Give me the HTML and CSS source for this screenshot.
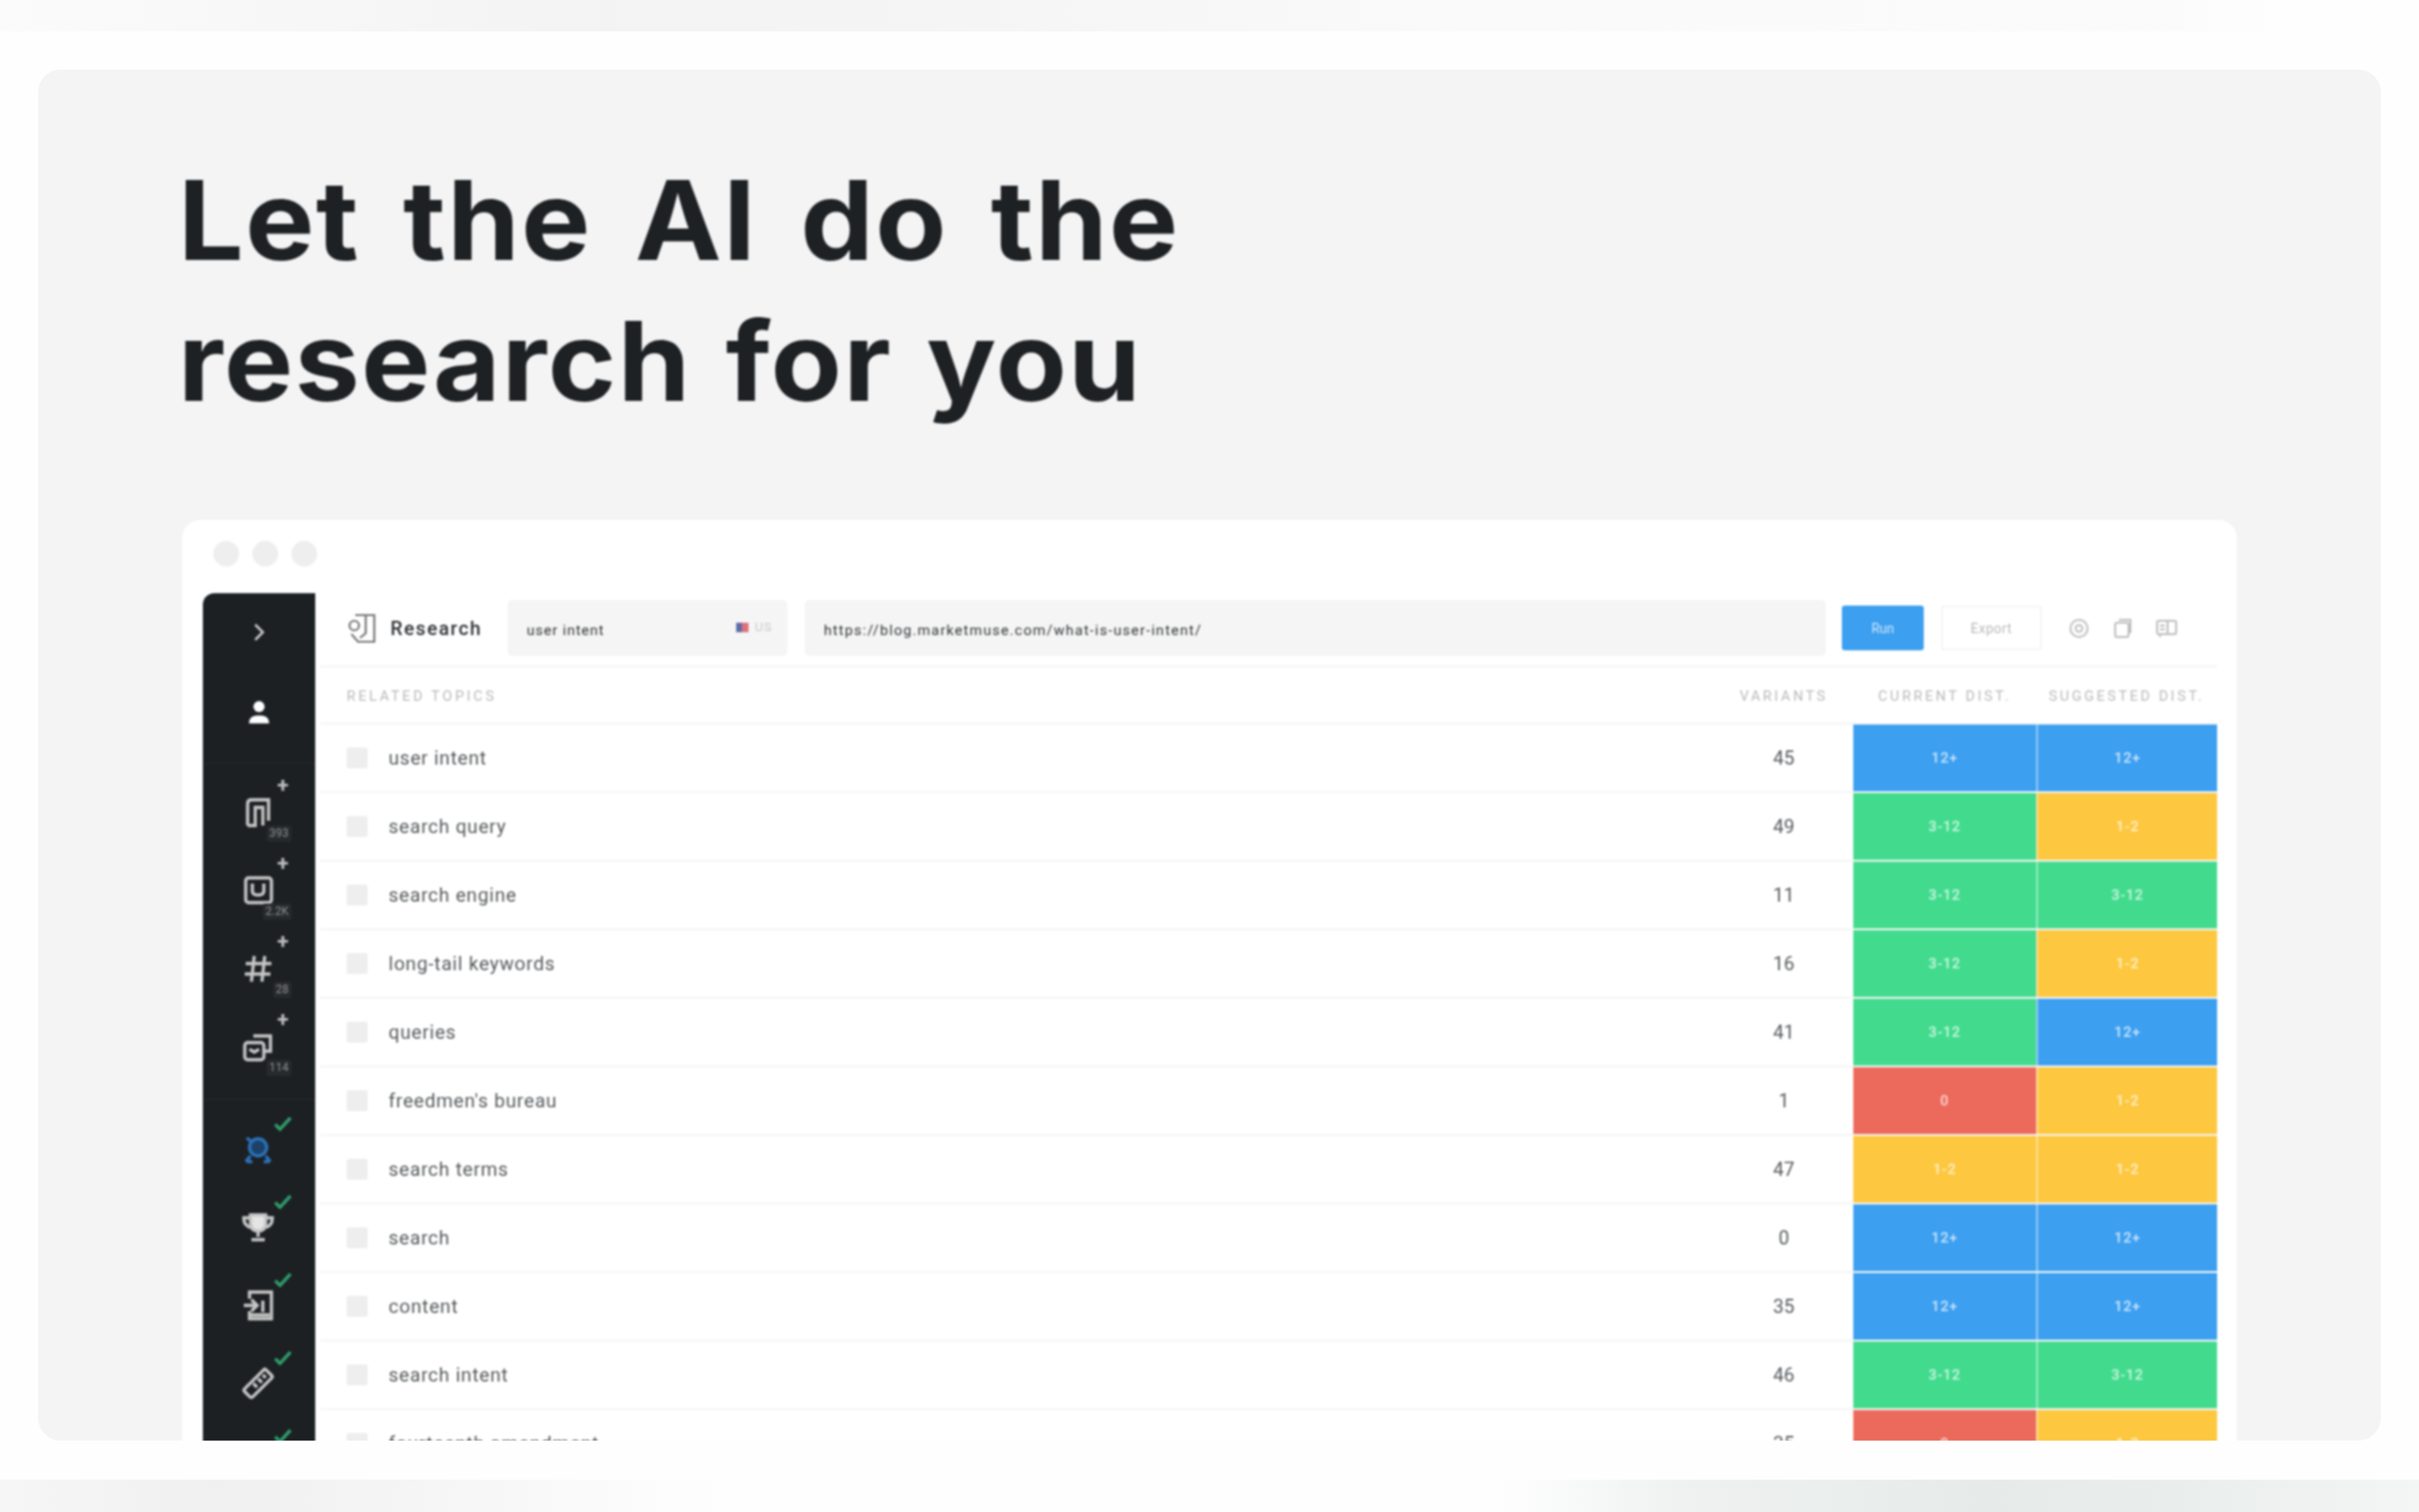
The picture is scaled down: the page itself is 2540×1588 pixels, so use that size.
FILE: index.html
```html
<!DOCTYPE html>
<html lang="en">
<head>
  <meta charset="UTF-8" />
  <title>Let the AI do the research for you</title>
  <link rel="stylesheet" href="styles.css">
</head>
<body>
  <div class="strip strip-top"></div>

  <section class="card">
    <h1><span class="line-one">Let the AI do the</span><span class="line-two">research for you</span></h1>

    <div class="window">
      <div class="dots"><span></span><span></span><span></span></div>

      <div class="app">
        <aside class="sidebar">
          <div class="side-top">
            <svg class="chevron" viewBox="0 0 24 24"><path d="M8 4l8 8-8 8"/></svg>
            <svg class="user" viewBox="0 0 24 24"><circle cx="12" cy="7" r="5"/><path d="M3 22c0-6 4-7 9-7s9 1 9 7z"/></svg>
          </div>

          <div class="side-group">
            <div class="tool">
              <svg class="glyph" viewBox="0 0 34 34"><path d="M6 31V8q0-4 4-4h18v22"/><path d="M6 31h8V12h8v19"/></svg>
              <span class="plus">+</span><span class="badge">393</span>
            </div>
            <div class="tool">
              <svg class="glyph" viewBox="0 0 34 34"><rect x="4" y="4" width="27" height="26" rx="3"/><path d="M11 10v8q0 4 6 4t6-4v-8"/></svg>
              <span class="plus">+</span><span class="badge">2.2K</span>
            </div>
            <div class="tool">
              <svg class="glyph" viewBox="0 0 34 34"><path d="M13 4l-3 27M24 4l-3 27M4 12h27M3 23h27"/></svg>
              <span class="plus">+</span><span class="badge">28</span>
            </div>
            <div class="tool">
              <svg class="glyph" viewBox="0 0 34 34"><path d="M12 6h18v16h-7"/><rect x="3" y="13" width="20" height="18" rx="3"/><path d="M8 20l5 3 5-3"/></svg>
              <span class="plus">+</span><span class="badge">114</span>
            </div>
          </div>

          <div class="side-group checked">
            <div class="tool tool-active">
              <svg class="glyph" viewBox="0 0 34 34"><circle cx="17" cy="15" r="9"/><path d="M5 5l5 4M9 24l-5 6M25 24l5 6M5 30h6M23 30h6"/></svg>
              <svg class="tick" viewBox="0 0 20 16"><path d="M2 9l5 5L18 2"/></svg>
            </div>
            <div class="tool">
              <svg class="glyph" viewBox="0 0 34 34"><path d="M9 4h16v8q0 9-8 9t-8-9z" class="solid"/><path d="M9 7H2q0 9 8 10M25 7h7q0 9-8 10M17 21v6M10 30h14"/></svg>
              <svg class="tick" viewBox="0 0 20 16"><path d="M2 9l5 5L18 2"/></svg>
            </div>
            <div class="tool">
              <svg class="glyph" viewBox="0 0 34 34"><path d="M8 10V3h23v28H8v-8"/><path d="M2 17h14M10 11l6 6-6 6M22 12v12M9 27h20"/></svg>
              <svg class="tick" viewBox="0 0 20 16"><path d="M2 9l5 5L18 2"/></svg>
            </div>
            <div class="tool">
              <svg class="glyph" viewBox="0 0 34 34"><rect x="1" y="11" width="32" height="12" rx="2" transform="rotate(-45 17 17)"/><path d="M12 17l4 4M17 12l4 4M22 8l3 3" /></svg>
              <svg class="tick" viewBox="0 0 20 16"><path d="M2 9l5 5L18 2"/></svg>
            </div>
            <div class="tool">
              <svg class="tick" viewBox="0 0 20 16"><path d="M2 9l5 5L18 2"/></svg>
            </div>
          </div>
        </aside>

        <div class="main">
          <div class="toolbar">
            <div class="title">
              <svg viewBox="0 0 30 32"><path d="M8 2h20v28H11L4 22"/><path d="M19 2v19l-6 5"/><circle cx="7" cy="13" r="5"/></svg>
              <span>Research</span>
            </div>
            <div class="field field-query">
              <span>user intent</span>
              <span class="locale"><i class="flag"></i>US</span>
            </div>
            <div class="field field-url">https://blog.marketmuse.com/what-is-user-intent/</div>
            <button class="btn btn-run">Run</button>
            <button class="btn btn-export">Export</button>
            <div class="actions">
              <svg viewBox="0 0 24 24"><circle cx="12" cy="12" r="9"/><circle cx="12" cy="12" r="3.5"/></svg>
              <svg viewBox="0 0 24 24"><rect x="4" y="6" width="14" height="15" rx="2"/><path d="M8 3h12v14"/></svg>
              <svg viewBox="0 0 24 24"><rect x="2" y="4" width="20" height="14" rx="2"/><path d="M13 4v14M5 18v3M5 9h5M5 13h5"/></svg>
            </div>
          </div>

          <div class="row head">
            <span class="name">Related topics</span>
            <span class="num">Variants</span>
            <span class="dist">Current dist.</span>
            <span class="dist">Suggested dist.</span>
          </div>

          <div class="row"><span class="name"><i></i>user intent</span><span class="num">45</span><span class="cell blue">12+</span><span class="cell blue">12+</span></div>
          <div class="row"><span class="name"><i></i>search query</span><span class="num">49</span><span class="cell green">3-12</span><span class="cell yellow">1-2</span></div>
          <div class="row"><span class="name"><i></i>search engine</span><span class="num">11</span><span class="cell green">3-12</span><span class="cell green">3-12</span></div>
          <div class="row"><span class="name"><i></i>long-tail keywords</span><span class="num">16</span><span class="cell green">3-12</span><span class="cell yellow">1-2</span></div>
          <div class="row"><span class="name"><i></i>queries</span><span class="num">41</span><span class="cell green">3-12</span><span class="cell blue">12+</span></div>
          <div class="row"><span class="name"><i></i>freedmen's bureau</span><span class="num">1</span><span class="cell red">0</span><span class="cell yellow">1-2</span></div>
          <div class="row"><span class="name"><i></i>search terms</span><span class="num">47</span><span class="cell yellow">1-2</span><span class="cell yellow">1-2</span></div>
          <div class="row"><span class="name"><i></i>search</span><span class="num">0</span><span class="cell blue">12+</span><span class="cell blue">12+</span></div>
          <div class="row"><span class="name"><i></i>content</span><span class="num">35</span><span class="cell blue">12+</span><span class="cell blue">12+</span></div>
          <div class="row"><span class="name"><i></i>search intent</span><span class="num">46</span><span class="cell green">3-12</span><span class="cell green">3-12</span></div>
          <div class="row"><span class="name"><i></i>fourteenth amendment</span><span class="num">35</span><span class="cell red">0</span><span class="cell yellow">1-2</span></div>
        </div>
      </div>
    </div>
  </section>

  <div class="strip strip-bottom"></div>
</body>
</html>
```

FILE: styles.css
```css
body {
  margin: 0;
  height: 1588px;
  overflow: hidden;
  background: #fefefe;
  font-family: Roboto, sans-serif;
  display: flex;
  flex-direction: column;
}

.strip {
  height: 33px;
  flex: none;
}

.strip-top {
  background: linear-gradient(90deg, #fbfbfb 0%, #f3f3f3 25%, #f5f5f5 40%, #fafafa 60%, #fbfbfb 90%, #fefefe 94%);
}

.strip-bottom {
  height: 34px;
  background: linear-gradient(90deg, #f6f6f6 0%, #f0f0f0 9%, #f5f5f5 17%, #fefefe 30%, #fefefe 62%, #eef1f0 70%, #e6ebe9 82%, #e9eeec 90%, #f4f5f5 100%);
}

.card {
  flex: none;
  height: 1440px;
  margin: 40px 40px 41px;
  padding: 0 151px;
  background: #f4f4f4;
  border-radius: 24px;
  overflow: hidden;
}

/* wider than Inter on its own, the original face is a geometric one */
h1 {
  margin: 85px 0 0 -4px;
  font-family: Inter, sans-serif;
  font-size: 115px;
  line-height: 148px;
  font-weight: 700;
  letter-spacing: 1.5px;
  color: #1e2124;
  transform: scaleX(1.06);
  transform-origin: left center;
  filter: blur(1px);
}

.line-one,
.line-two {
  display: block;
  white-space: nowrap;
}

.line-one {
  word-spacing: 14px;
}

.line-two {
  word-spacing: 5px;
}

.window {
  margin-top: 92px;
  padding: 0 21px 0 22px;
  background: #fff;
  border-radius: 20px 20px 0 0;
  filter: blur(1.1px);
}

.dots {
  height: 77px;
  display: flex;
  align-items: center;
  gap: 14px;
  padding: 0 0 7px 11px;
  box-sizing: border-box;
}

.dots span {
  width: 27px;
  height: 27px;
  border-radius: 50%;
  background: #eeeeee;
}

.app {
  display: flex;
  align-items: flex-start;
}

/* left rail */
.sidebar {
  width: 118px;
  height: 960px;
  flex: none;
  background: #1c2023;
  border-radius: 12px 0 0 0;
  color: #ccc;
}

.side-top {
  display: flex;
  flex-direction: column;
  align-items: center;
  height: 179px;
  padding-top: 29px;
  box-sizing: border-box;
  border-bottom: 1px solid #24282b;
}

.chevron {
  width: 24px;
  height: 24px;
  fill: none;
  stroke: #c9c9c9;
  stroke-width: 2.5;
}

.user {
  width: 28px;
  height: 28px;
  margin-top: 58px;
  fill: #fff;
}

.side-group {
  padding: 10px 0 14px;
  border-bottom: 1px solid #24282b;
}

.side-group.checked {
  padding-top: 11px;
  border: 0;
}

.tool {
  position: relative;
  height: 82px;
  display: flex;
  align-items: center;
  justify-content: center;
}

.glyph {
  width: 34px;
  height: 34px;
  margin-right: 3px;
  fill: none;
  stroke: #c6c6c6;
  stroke-width: 3.4;
}

.tool-active .glyph {
  stroke: #2b72bb;
  fill: #1d4268;
}

.glyph .solid {
  fill: #e4e4e4;
}

.plus {
  position: absolute;
  left: 74px;
  top: 1px;
  width: 20px;
  text-align: center;
  font-size: 22px;
  line-height: 24px;
  font-weight: 700;
  color: #bdbdbd;
}

.badge {
  position: absolute;
  right: 25px;
  top: 55px;
  padding: 1px 3px;
  font-size: 12px;
  line-height: 15px;
  color: #8f8f8f;
  background: #262a2d;
  border-radius: 2px;
}

.tick {
  position: absolute;
  left: 74px;
  top: 6px;
  width: 20px;
  height: 16px;
  fill: none;
  stroke: #2f9d6b;
  stroke-width: 3.4;
}

/* table side */
.main {
  flex: 1;
  min-width: 0;
  margin-left: 5px;
}

.toolbar {
  display: flex;
  align-items: center;
  height: 59px;
  margin-top: 7px;
  padding: 0 41px 10px 0;
  border-bottom: 2px solid #f4f4f4;
}

.title {
  display: flex;
  align-items: center;
  gap: 15px;
  width: 197px;
  box-sizing: border-box;
  padding-left: 29px;
  flex: none;
  font-size: 20px;
  font-weight: 500;
  letter-spacing: 1.6px;
  color: #2b2e32;
}

.title svg {
  width: 30px;
  height: 32px;
  flex: none;
  fill: none;
  stroke: #777;
  stroke-width: 2.2;
}

.field {
  height: 59px;
  padding: 4px 20px 0;
  box-sizing: border-box;
  display: flex;
  align-items: center;
  background: #f5f5f5;
  border-radius: 5px;
  font-size: 15px;
  color: #2f3235;
}

.field-query {
  width: 294px;
  flex: none;
  margin-right: 18px;
  justify-content: space-between;
  letter-spacing: 1px;
}

.field-url {
  flex: 1;
  min-width: 0;
  margin-right: 17px;
  letter-spacing: 1.3px;
}

.locale {
  display: flex;
  align-items: center;
  gap: 7px;
  margin: -6px -4px 0 0;
  font-size: 13px;
  color: #c8c8c8;
}

.flag {
  width: 13px;
  height: 10px;
  background: linear-gradient(90deg, #5b6ea8 45%, #e0707c 45%);
}

.btn {
  height: 47px;
  padding: 0;
  flex: none;
  margin-right: 18px;
  border-radius: 3px;
  font-family: Roboto, sans-serif;
  font-size: 14px;
}

.btn-run {
  width: 86px;
  border: 0;
  background: #3c9ff0;
  color: #cfe7fb;
}

.btn-export {
  width: 106px;
  margin-right: 27px;
  border: 2px solid #f5f5f5;
  background: #fff;
  color: #b8b8b8;
  letter-spacing: 0.5px;
}

.actions {
  display: flex;
  gap: 22px;
}

.actions svg {
  width: 24px;
  height: 24px;
  fill: none;
  stroke: #bdbdbd;
  stroke-width: 2;
}

.row {
  display: grid;
  grid-template-columns: 1fr 146px 192px 190px;
  height: 72px;
  box-sizing: border-box;
  border-bottom: 2px solid #f4f4f4;
  color: #55585b;
  font-size: 20px;
}

.row > span {
  display: flex;
  align-items: center;
  min-width: 0;
}

.name {
  padding-left: 28px;
  letter-spacing: 0.8px;
}

.name i {
  width: 22px;
  height: 22px;
  margin-right: 22px;
  background: #eeeeee;
  border-radius: 2px;
}

.row > .num {
  justify-content: center;
}

.cell {
  justify-content: center;
  font-size: 15px;
  font-weight: 500;
  letter-spacing: 0.8px;
  color: rgba(255, 255, 255, 0.75);
}

.cell + .cell {
  border-left: 2px solid rgba(255, 255, 255, 0.45);
}

.blue { background: #3c9ff0; }
.green { background: #42db8d; }
.yellow { background: #fdc73f; }
.red { background: #ec6a5c; }

.row.head {
  height: 60px;
  padding-top: 2px;
  color: #b9b9b9;
  font-size: 15px;
  letter-spacing: 2.8px;
  text-transform: uppercase;
}

.row.head .name {
  letter-spacing: 2.9px;
}

.row.head .dist {
  justify-content: center;
  white-space: nowrap;
}
```
